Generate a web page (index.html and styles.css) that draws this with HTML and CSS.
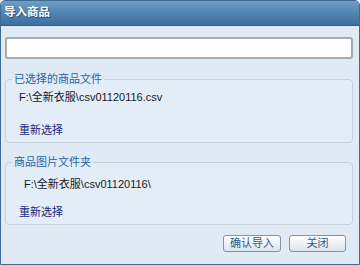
FILE: index.html
```html
<!DOCTYPE html>
<html lang="zh-CN">

<head>
    <meta charset="UTF-8">
    <meta name="viewport" content="width=device-width, initial-scale=1.0">
    <title>导入商品</title>
    <link rel="stylesheet" href="styles.css">
</head>

<body>
    <div class="dialog">
        <div class="title-bar">导入商品</div>

        <div class="dialog-body">
            <input type="text" class="path-input">

            <fieldset class="group group-file">
                <legend>已选择的商品文件</legend>
                <div class="path-text">F:\全新衣服\csv01120116.csv</div>
                <a href="#" class="reselect">重新选择</a>
            </fieldset>

            <fieldset class="group group-folder">
                <legend>商品图片文件夹</legend>
                <div class="path-text indent">F:\全新衣服\csv01120116\</div>
                <a href="#" class="reselect">重新选择</a>
            </fieldset>

            <div class="button-row">
                <button class="btn btn-confirm">确认导入</button>
                <button class="btn btn-close">关闭</button>
            </div>
        </div>
    </div>
</body>

</html>
```

FILE: styles.css
```css
body {
    margin: 0;
    font-family: "Liberation Sans", "Noto Sans CJK SC", sans-serif;
    font-size: 11px;
    background-color: #ffffff;
}

.dialog {
    width: 358px;
    height: 263px;
    border: 1px solid #3d6b93;
    border-radius: 5px 5px 0 0;
    background-color: #dfeaf5;
    overflow: hidden;
}

.title-bar {
    height: 24px;
    line-height: 23px;
    padding-left: 3px;
    color: #ffffff;
    font-weight: bold;
    font-size: 11.5px;
    text-shadow: 1px 1px 1px #2a4d70;
    background: linear-gradient(to bottom, #6e9dc6 0%, #5385b2 50%, #3f6f9c 100%);
    border-bottom: 1px solid #355f88;
}

.dialog-body {
    padding: 11px 6px 0 4px;
}

.path-input {
    display: block;
    box-sizing: border-box;
    width: 348px;
    height: 22px;
    margin: 0;
    border: 2px solid #a7a9ac;
    border-radius: 3px;
    background-color: #ffffff;
}

.group {
    box-sizing: border-box;
    width: 348px;
    margin: 0;
    border: 1px solid #c6d0da;
    border-radius: 4px;
    background-color: #e3edf7;
    padding: 0 0 5px 13px;
}

.group-file {
    margin-top: 13px;
}

.group-folder {
    margin-top: 12px;
}

.group legend {
    color: #2563a8;
    padding: 0 2px;
    margin-left: -7px;
    line-height: 14px;
}

.path-text {
    line-height: 14px;
    margin-top: 4px;
    color: #1a1a1a;
}

.group-folder .path-text {
    margin-top: 8px;
}

.indent {
    padding-left: 5px;
}

.reselect {
    display: block;
    line-height: 14px;
    margin-top: 19px;
    color: #18287e;
    text-decoration: none;
}

.group-folder .reselect {
    margin-top: 14px;
}

.button-row {
    display: flex;
    justify-content: flex-end;
    gap: 8px;
    margin-top: 10px;
    padding-right: 7px;
}

.btn {
    height: 17px;
    padding: 0;
    font-family: "Liberation Sans", "Noto Sans CJK SC", sans-serif;
    font-size: 11px;
    line-height: 15px;
    color: #2b5c8a;
    border: 1px solid #8094ab;
    border-radius: 3px;
    background: linear-gradient(to bottom, #ffffff 0%, #eef2f7 50%, #d8e1eb 100%);
}

.btn-confirm {
    width: 58px;
}

.btn-close {
    width: 57px;
}
```
